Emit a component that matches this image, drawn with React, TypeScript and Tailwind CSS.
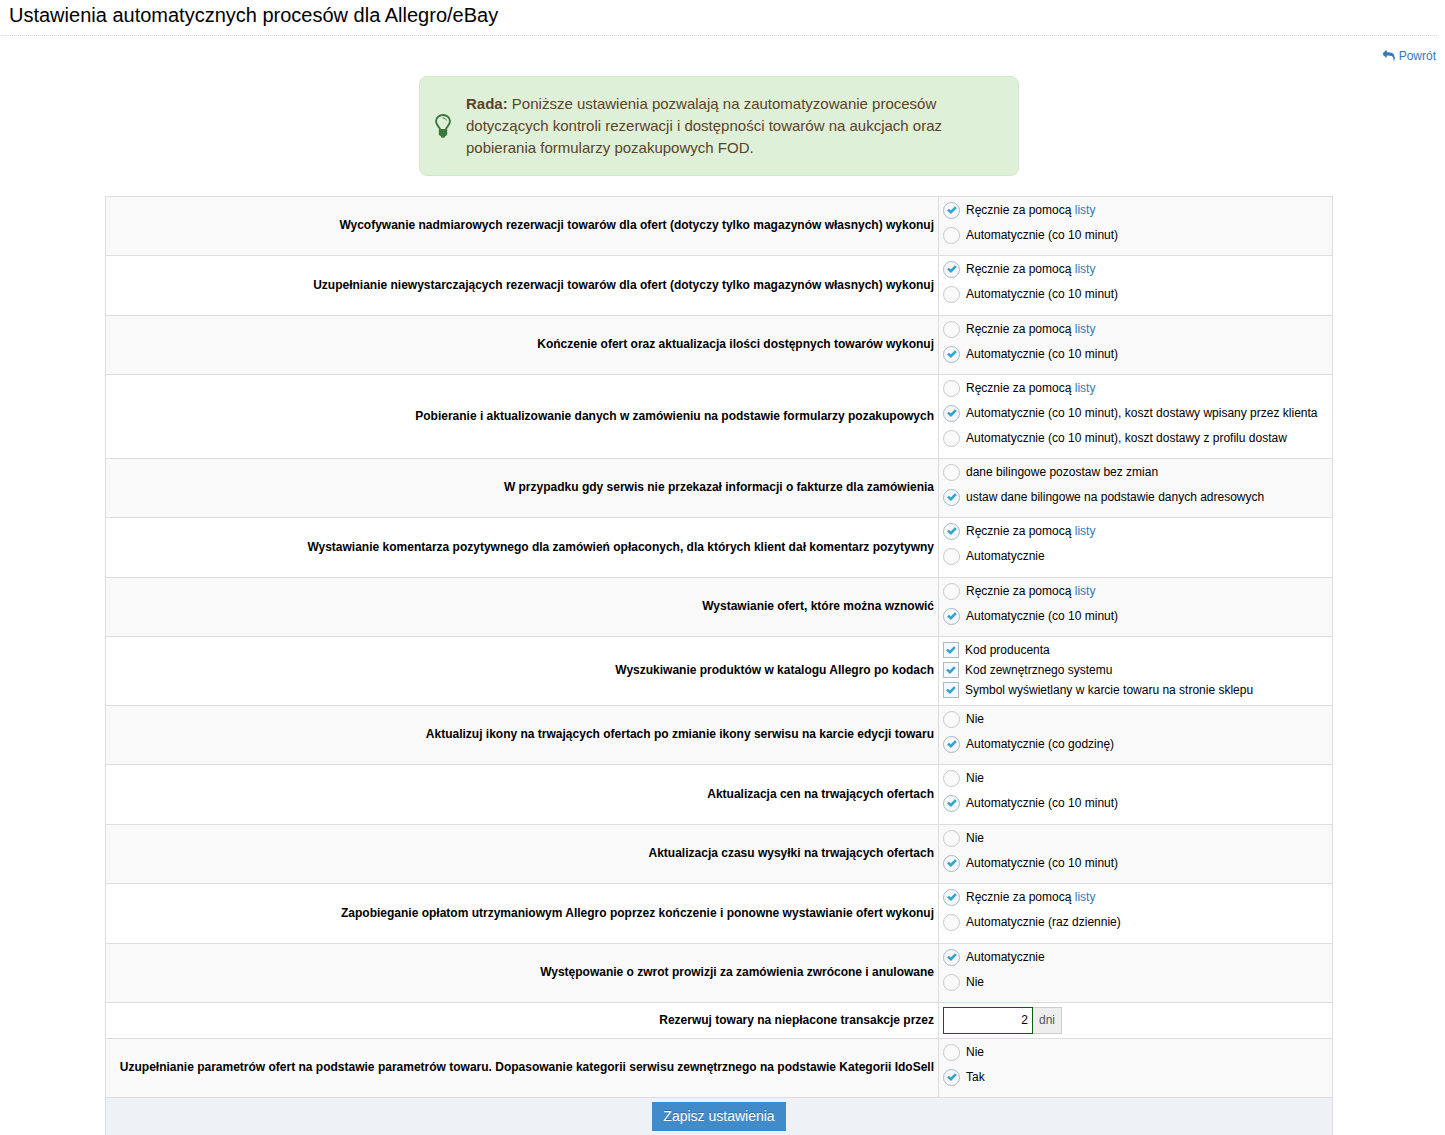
import React, { useState } from "react";

interface Option {
  label: string;
  link?: string;
}

interface Setting {
  id: string;
  title: string;
  type: "radio" | "checkbox" | "days";
  options: Option[];
  selected: number[];
}

const manual: Option = { label: "Ręcznie za pomocą", link: "listy" };
const every10: Option = { label: "Automatycznie (co 10 minut)" };
const no: Option = { label: "Nie" };

const initialSettings: Setting[] = [
  {
    id: "withdraw",
    title:
      "Wycofywanie nadmiarowych rezerwacji towarów dla ofert (dotyczy tylko magazynów własnych) wykonuj",
    type: "radio",
    options: [manual, every10],
    selected: [0],
  },
  {
    id: "refill",
    title:
      "Uzupełnianie niewystarczających rezerwacji towarów dla ofert (dotyczy tylko magazynów własnych) wykonuj",
    type: "radio",
    options: [manual, every10],
    selected: [0],
  },
  {
    id: "finish",
    title: "Kończenie ofert oraz aktualizacja ilości dostępnych towarów wykonuj",
    type: "radio",
    options: [manual, every10],
    selected: [1],
  },
  {
    id: "forms",
    title:
      "Pobieranie i aktualizowanie danych w zamówieniu na podstawie formularzy pozakupowych",
    type: "radio",
    options: [
      manual,
      { label: "Automatycznie (co 10 minut), koszt dostawy wpisany przez klienta" },
      { label: "Automatycznie (co 10 minut), koszt dostawy z profilu dostaw" },
    ],
    selected: [1],
  },
  {
    id: "invoice",
    title:
      "W przypadku gdy serwis nie przekazał informacji o fakturze dla zamówienia",
    type: "radio",
    options: [
      { label: "dane bilingowe pozostaw bez zmian" },
      { label: "ustaw dane bilingowe na podstawie danych adresowych" },
    ],
    selected: [1],
  },
  {
    id: "comment",
    title:
      "Wystawianie komentarza pozytywnego dla zamówień opłaconych, dla których klient dał komentarz pozytywny",
    type: "radio",
    options: [manual, { label: "Automatycznie" }],
    selected: [0],
  },
  {
    id: "resume",
    title: "Wystawianie ofert, które można wznowić",
    type: "radio",
    options: [manual, every10],
    selected: [1],
  },
  {
    id: "codes",
    title: "Wyszukiwanie produktów w katalogu Allegro po kodach",
    type: "checkbox",
    options: [
      { label: "Kod producenta" },
      { label: "Kod zewnętrznego systemu" },
      { label: "Symbol wyświetlany w karcie towaru na stronie sklepu" },
    ],
    selected: [0, 1, 2],
  },
  {
    id: "icons",
    title:
      "Aktualizuj ikony na trwających ofertach po zmianie ikony serwisu na karcie edycji towaru",
    type: "radio",
    options: [no, { label: "Automatycznie (co godzinę)" }],
    selected: [1],
  },
  {
    id: "prices",
    title: "Aktualizacja cen na trwających ofertach",
    type: "radio",
    options: [no, every10],
    selected: [1],
  },
  {
    id: "shipping",
    title: "Aktualizacja czasu wysyłki na trwających ofertach",
    type: "radio",
    options: [no, every10],
    selected: [1],
  },
  {
    id: "fees",
    title:
      "Zapobieganie opłatom utrzymaniowym Allegro poprzez kończenie i ponowne wystawianie ofert wykonuj",
    type: "radio",
    options: [manual, { label: "Automatycznie (raz dziennie)" }],
    selected: [0],
  },
  {
    id: "commission",
    title: "Występowanie o zwrot prowizji za zamówienia zwrócone i anulowane",
    type: "radio",
    options: [{ label: "Automatycznie" }, no],
    selected: [0],
  },
  {
    id: "days",
    title: "Rezerwuj towary na niepłacone transakcje przez",
    type: "days",
    options: [],
    selected: [],
  },
  {
    id: "params",
    title:
      "Uzupełnianie parametrów ofert na podstawie parametrów towaru. Dopasowanie kategorii serwisu zewnętrznego na podstawie Kategorii IdoSell",
    type: "radio",
    options: [no, { label: "Tak" }],
    selected: [1],
  },
];

const Tick: React.FC = () => (
  <svg
    viewBox="0 0 10 8"
    className="pointer-events-none col-start-1 row-start-1 hidden h-2 w-2.5 place-self-center peer-checked:block"
    fill="none"
    stroke="#32a3ce"
    strokeWidth="2.6"
    aria-hidden="true"
  >
    <path d="M1 3.6 3.9 6.2 8.9 1.2" />
  </svg>
);

const ReplyIcon: React.FC = () => (
  <svg viewBox="0 0 1792 1792" className="size-3" fill="currentColor" aria-hidden="true">
    <path d="M1792 1120q0 166-127 451-3 7-10.5 24t-13.5 30-13 22q-12 17-28 17-15 0-23.5-10t-8.500-25q0-9 2.500-26.500t2.500-23.500q5-68 5-123 0-112-19.500-200.500t-54-153.500-89-112-117.500-77.500-148-47-173.500-24.500-203.500-7h-224v256q0 26-19 45t-45 19-45-19l-512-512q-19-19-19-45t19-45l512-512q19-19 45-19t45 19 19 45v256h224q713 0 875 403 53 134 53 333z" />
  </svg>
);

const BulbIcon: React.FC = () => (
  <svg viewBox="0 0 16 24" className="h-6 w-4 shrink-0" fill="none" aria-hidden="true">
    <path
      d="M5.2 16C5 13 1 11.400 1 7.300 1 3.600 4.200 1 8 1s7 2.600 7 6.300c0 4.100-4 5.700-4.200 8.700"
      stroke="#3c763d"
      strokeWidth="1.9"
    />
    <path d="M7.600 4c2.200 0 3.400 1 3.800 2.600" stroke="#3c763d" strokeWidth="1" />
    <path
      d="M4 15h8l.3 1.500-.3 1.200.4 1.200-.4 1.300.1.800-1.900 1.200L9.300 23.700H6.700l-.9-1.500-1.900-1.200.1-.8-.4-1.300.4-1.200-.3-1.200z"
      fill="#3c763d"
    />
  </svg>
);

const App: React.FC = () => {
  const [settings, setSettings] = useState<Setting[]>(initialSettings);
  const [days, setDays] = useState("2");

  const handleSelect = (id: string, index: number) => {
    setSettings((prev) =>
      prev.map((item) => {
        if (item.id !== id) return item;
        if (item.type === "radio") return { ...item, selected: [index] };
        return {
          ...item,
          selected: item.selected.includes(index)
            ? item.selected.filter((i) => i !== index)
            : [...item.selected, index],
        };
      })
    );
  };

  const renderOption = (item: Setting, option: Option, index: number) => {
    const isRadio = item.type === "radio";
    const inputId = `${item.id}-${index}`;
    return (
      <div
        key={inputId}
        className={
          isRadio
            ? "mb-[5px] flex h-5 items-center gap-1.5"
            : "flex h-5 items-center gap-1.5"
        }
      >
        <span className="grid">
          <input
            type={item.type}
            id={inputId}
            name={item.id}
            checked={item.selected.includes(index)}
            onChange={() => handleSelect(item.id, index)}
            className={
              isRadio
                ? "peer col-start-1 row-start-1 size-[17px] appearance-none rounded-full border border-[#c8c8c8] bg-[#fafafa] checked:border-[#adb8c0] checked:bg-[#f5f8fc]"
                : "peer col-start-1 row-start-1 size-4 appearance-none border border-[#c8c8c8] bg-[#fafafa] checked:border-[#adb8c0] checked:bg-[#f5f8fc]"
            }
          />
          <Tick />
        </span>
        <label htmlFor={inputId}>
          {option.label}
          {option.link && (
            <>
              {" "}
              <a href="#" className="text-[#337ab7]">
                {option.link}
              </a>
            </>
          )}
        </label>
      </div>
    );
  };

  return (
    <div className="bg-white pr-2 pl-px font-['Liberation_Sans',Arial,sans-serif] text-xs text-black">
      <h1 className="border-b border-dotted border-[#d8d8d8] px-2 pt-px pb-1.5 text-xl">
        Ustawienia automatycznych procesów dla Allegro/eBay
      </h1>
      <div className="flex justify-end pt-3 pr-px">
        <a href="#" className="flex items-center gap-1 text-[#337ab7]">
          <ReplyIcon />
          Powrót
        </a>
      </div>

      <div className="mx-auto mt-3 flex max-w-[600px] items-center gap-[15px] rounded-lg border border-[#d0e9c6] bg-[#dff0d8] py-4 pr-10 pl-[15px] text-[15px] leading-[22px] text-[#5a4328]">
        <BulbIcon />
        <p>
          <strong>Rada:</strong> Poniższe ustawienia pozwalają na
          zautomatyzowanie procesów dotyczących kontroli rezerwacji i dostępności
          towarów na aukcjach oraz pobierania formularzy pozakupowych FOD.
        </p>
      </div>

      <form className="mx-[104px] mt-5" onSubmit={(e) => e.preventDefault()}>
        <table className="w-full border-collapse">
          <tbody>
            {settings.map((item) => (
              <tr
                key={item.id}
                className={
                  item.options.length === 2
                    ? "odd:bg-[#f9f9f9] even:h-[60px]"
                    : "odd:bg-[#f9f9f9]"
                }
              >
                <th
                  scope="row"
                  className="border border-[#dddddd] px-1 pb-0.5 text-right font-bold"
                >
                  {item.type === "days" ? (
                    <label htmlFor="days">{item.title}</label>
                  ) : (
                    item.title
                  )}
                </th>
                <td
                  className={
                    item.type === "days"
                      ? "w-[394px] border border-[#dddddd] p-1"
                      : "w-[394px] border border-[#dddddd] px-1 pt-[3px] pb-[5px] align-top"
                  }
                >
                  {item.type === "days" ? (
                    <div className="flex h-[27px]">
                      <input
                        type="text"
                        id="days"
                        value={days}
                        onChange={(e) => setDays(e.target.value)}
                        className="w-[90px] border border-[#0b5c0b] bg-white px-1 pb-0.5 text-right"
                      />
                      <span className="flex items-center border border-l-0 border-[#cccccc] bg-[#eeeeee] px-1.5 pb-0.5 text-[#555555]">
                        dni
                      </span>
                    </div>
                  ) : (
                    item.options.map((option, index) =>
                      renderOption(item, option, index)
                    )
                  )}
                </td>
              </tr>
            ))}
          </tbody>
          <tfoot>
            <tr>
              <td
                colSpan={2}
                className="border border-b-0 border-[#dddddd] bg-[#eef1f6] p-1"
              >
                <button
                  type="submit"
                  className="mx-auto block h-[29px] bg-[#428bca] px-[11px] pb-0.5 text-sm text-white [text-shadow:0_-1px_0_rgba(0,0,0,0.25)]"
                >
                  Zapisz ustawienia
                </button>
              </td>
            </tr>
          </tfoot>
        </table>
      </form>
    </div>
  );
};

export default App;
